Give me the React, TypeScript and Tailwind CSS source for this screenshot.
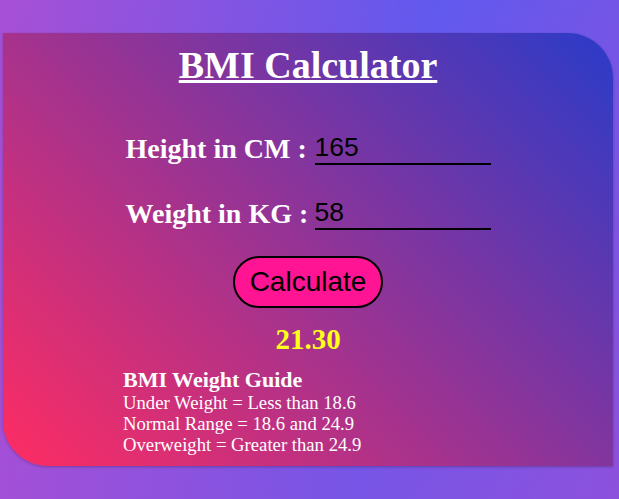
import React, { useState } from 'react';

// BMI calculator card
export default function App() {
  const [height, setHeight] = useState('165');
  const [weight, setWeight] = useState('58');
  const [bmi, setBmi] = useState('21.30');

  const calculate = () => {
    const h = parseFloat(height) / 100;
    const w = parseFloat(weight);
    if (!h || !w) {
      setBmi('');
      return;
    }
    setBmi((w / (h * h)).toFixed(2));
  };

  return (
    <div className="min-h-screen w-full pt-[33px] pl-[3px] pb-[33px] bg-[linear-gradient(to_bottom,rgba(200,70,200,0)_0%,rgba(200,70,200,0.22)_100%),linear-gradient(100deg,#a750d6_0%,#6159ee_62%,#7c54e3_100%)] font-['Liberation_Serif',serif]">
      <div className="w-[610px] h-[433px] pt-[10px] rounded-tr-[45px] rounded-bl-[45px] bg-[linear-gradient(45deg,#ff2c62_0%,#2a3bc9_100%)] shadow-[0_1px_3px_rgba(0,0,0,0.25)] text-white">
        <h1 className="text-center text-[38px] leading-[44px] font-bold underline decoration-[3px] underline-offset-[2px]">
          BMI Calculator
        </h1>

        <div className="mt-[46px] grid grid-cols-[184px_176px] gap-x-[5px] gap-y-[33px] justify-center">
          <label className="text-[28px] leading-[32px] font-bold whitespace-nowrap">Height in CM :</label>
          <input
            value={height}
            onChange={(e) => setHeight(e.target.value)}
            className="h-[32px] w-[176px] self-start bg-transparent border-0 border-b-2 border-black p-0 text-[26.5px] text-black outline-none font-['Liberation_Sans',Arial,sans-serif]"
          />
          <label className="text-[28px] leading-[32px] font-bold whitespace-nowrap">Weight in KG :</label>
          <input
            value={weight}
            onChange={(e) => setWeight(e.target.value)}
            className="h-[32px] w-[176px] self-start bg-transparent border-0 border-b-2 border-black p-0 text-[26.5px] text-black outline-none font-['Liberation_Sans',Arial,sans-serif]"
          />
        </div>

        <div className="mt-[26px] flex justify-center">
          <button
            onClick={calculate}
            className="w-[150px] h-[52px] rounded-full border-2 border-black bg-[#ff1493] text-[28px] leading-[32px] text-black font-['Liberation_Sans',Arial,sans-serif]"
          >
            Calculate
          </button>
        </div>

        <div className="mt-[15px] h-[32px] text-center text-[29px] leading-[32px] font-bold text-[#ffff1a]">{bmi}</div>

        <div className="mt-[12px] ml-[120px]">
          <h3 className="text-[22px] leading-[25px] font-bold">BMI Weight Guide</h3>
          <p className="text-[18.7px] leading-[21px]">Under Weight = Less than 18.6</p>
          <p className="text-[18.7px] leading-[21px]">Normal Range = 18.6 and 24.9</p>
          <p className="text-[18.7px] leading-[21px]">Overweight = Greater than 24.9</p>
        </div>
      </div>
    </div>
  );
}
